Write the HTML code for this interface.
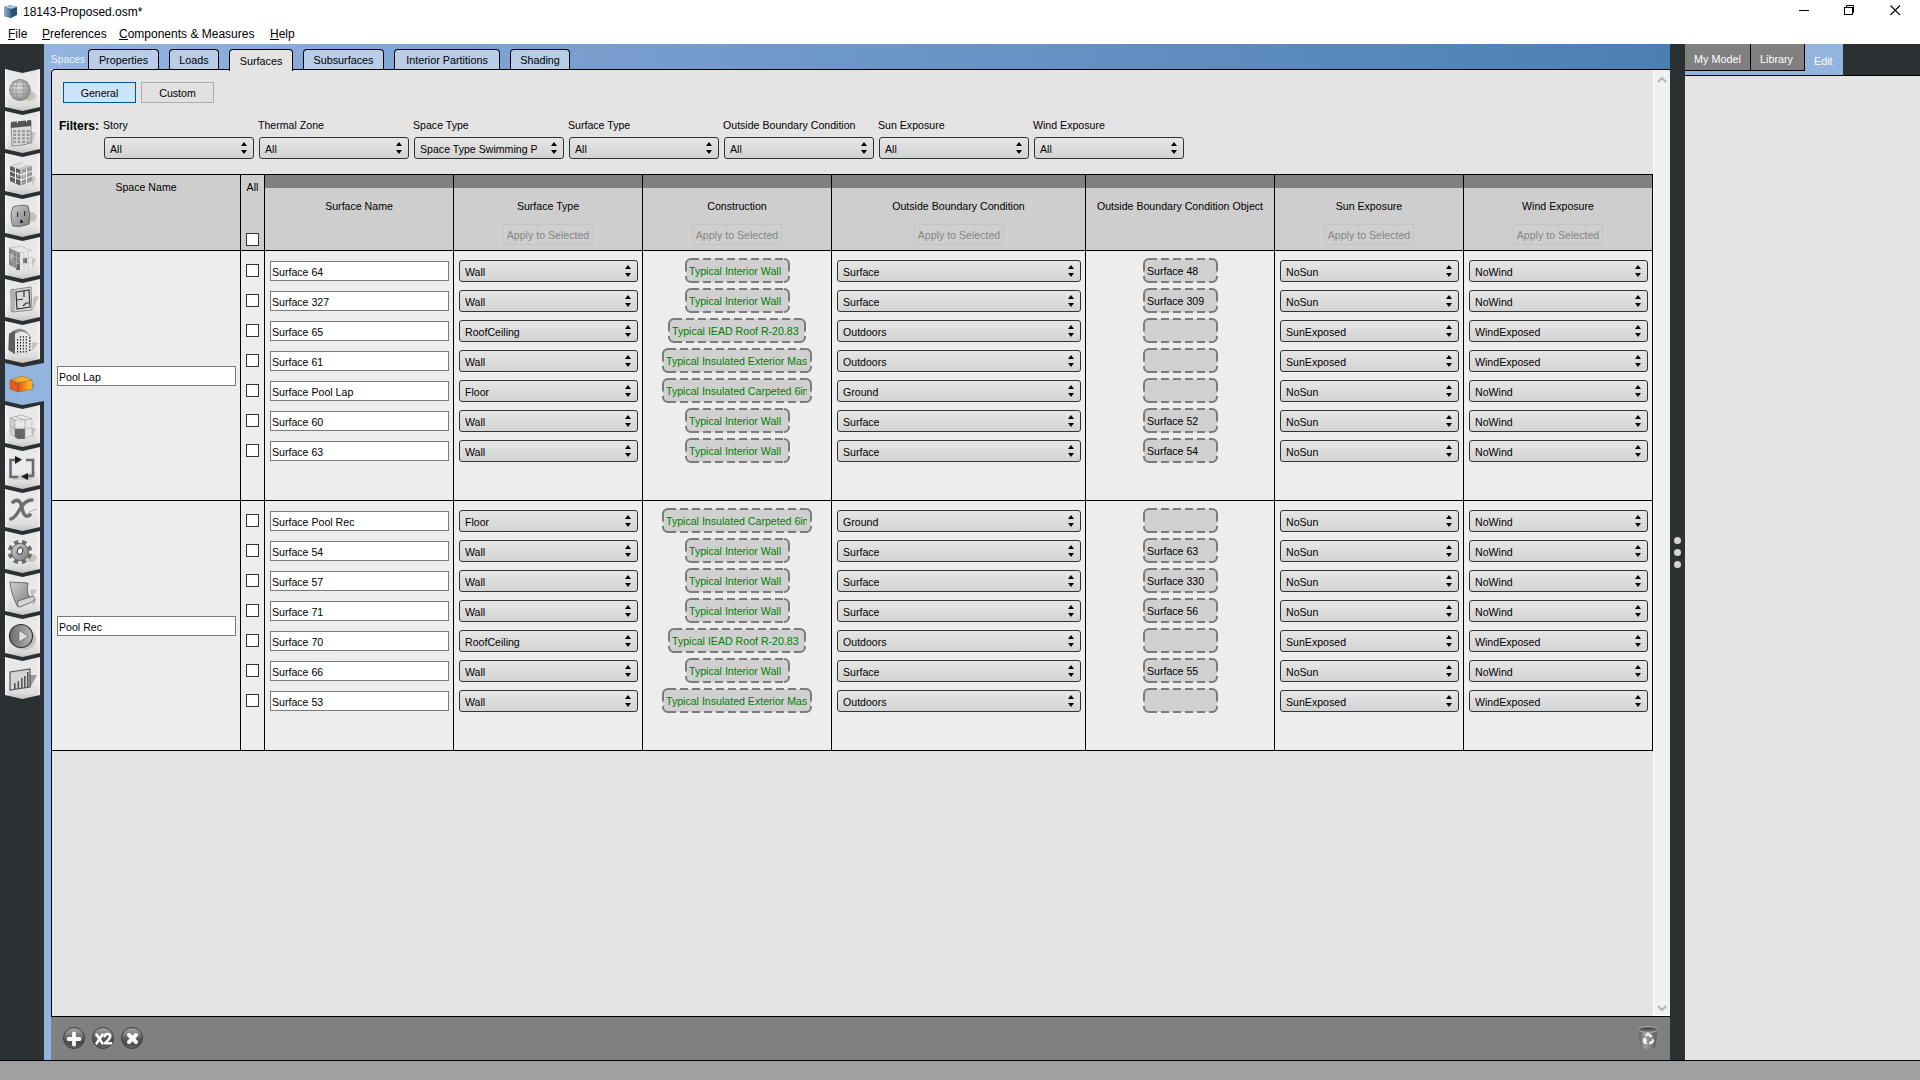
<!DOCTYPE html><html><head><meta charset="utf-8"><style>
*{box-sizing:border-box;margin:0;padding:0}
html,body{width:1920px;height:1080px;overflow:hidden;background:#fff;font-family:"Liberation Sans",sans-serif;color:#000}
.ab{position:absolute}
.t{position:absolute;white-space:nowrap;font-size:10.6px;line-height:13px}
.title{font-size:12px}
.menu{position:absolute;top:27px;font-size:12px;line-height:14px}
.menu u{text-decoration:none;position:relative}
.menu u:after{content:'';position:absolute;left:0;right:0;top:12px;height:1px;background:#000}
.tab{position:absolute;top:49px;height:21px;background:#b9cde8;border:1px solid #000;border-bottom:none;border-radius:4px 4px 0 0;font-size:10.8px;text-align:center;line-height:20px}
.cb{position:absolute;width:13px;height:13px;background:#fff;border:1px solid #333}
.le{position:absolute;height:20px;background:#fff;border:1px solid #7a7a7a;font-size:10.6px;line-height:18px;padding-left:1px;padding-top:1px;white-space:nowrap;overflow:hidden}
.co{position:absolute;height:22px;border:1px solid #2f3437;border-radius:3px;background:linear-gradient(#e6e6e6,#d3d3d3);font-size:10.6px;line-height:20px;padding-left:5px;padding-top:1px;white-space:nowrap;overflow:hidden}
.co:after{content:"";position:absolute;right:6px;top:4px;width:0;height:0;border-left:3px solid transparent;border-right:3px solid transparent;border-bottom:4px solid #000}
.co:before{content:"";position:absolute;right:6px;top:12px;width:0;height:0;border-left:3px solid transparent;border-right:3px solid transparent;border-top:4px solid #000}
.co span{display:block;overflow:hidden;width:calc(100% - 26px)}
.dz{position:absolute;height:25px}
.dz svg{position:absolute;left:0;top:0}
.dz div{position:absolute;left:4px;top:7px;font-size:10.6px;line-height:13px;white-space:nowrap;overflow:hidden}
.g{color:#008000}
.hd{position:absolute;font-size:10.6px;line-height:13px;white-space:nowrap;text-align:center}
.ap{position:absolute;top:224px;height:21px;width:90px;border:1px solid #c4c4c4;color:#858585;font-size:10.6px;line-height:19px;padding-top:1px;text-align:center;white-space:nowrap}
.vl{position:absolute;width:1px;background:#000}
.hl{position:absolute;height:1px;background:#000}
</style></head><body>
<svg class="ab" style="left:3px;top:4px" width="15" height="15" viewBox="0 0 15 15">
<defs><linearGradient id="cg1" x1="0" y1="0" x2="1" y2="0"><stop offset="0" stop-color="#8fb2d0"/><stop offset="1" stop-color="#3d6a92"/></linearGradient></defs>
<polygon points="1,3 7,1 14,3 14,11 8,14 1,12" fill="#2a4d70"/>
<polygon points="1,3 7,1 14,3 8,5" fill="#a9c7e0"/>
<polygon points="1,3 8,5 8,14 1,12" fill="url(#cg1)"/>
</svg>
<div class="t title" style="left:23px;top:5px;line-height:14px">18143-Proposed.osm*</div>
<div class="ab" style="left:1799px;top:10px;width:10px;height:1px;background:#000"></div>
<svg class="ab" style="left:1843px;top:4px" width="13" height="13" viewBox="0 0 13 13"><rect x="1.5" y="3.5" width="8" height="7" fill="none" stroke="#000"/><polyline points="3.5,3.5 3.5,1.5 10.5,1.5 10.5,8.5 9.5,8.5" fill="none" stroke="#000"/></svg>
<svg class="ab" style="left:1889px;top:4px" width="13" height="13" viewBox="0 0 13 13"><path d="M1.5 1.5L11 11M11 1.5L1.5 11" stroke="#000" stroke-width="1.1"/></svg>
<div class="menu" style="left:8px"><u>F</u>ile</div>
<div class="menu" style="left:42px"><u>P</u>references</div>
<div class="menu" style="left:119px"><u>C</u>omponents &amp; Measures</div>
<div class="menu" style="left:270px"><u>H</u>elp</div>
<div class="ab" style="left:0;top:44px;width:44px;height:1016px;background:#2b3033"></div>
<div class="ab" style="left:44px;top:44px;width:7px;height:1016px;background:#94b4e0"></div>
<svg class="ab" style="left:0;top:44px" width="51" height="1016" viewBox="0 44 51 1016">
<defs>
<linearGradient id="btn" x1="0" y1="0" x2="0" y2="1"><stop offset="0" stop-color="#e6e6e6"/><stop offset="0.55" stop-color="#ececec"/><stop offset="0.85" stop-color="#dcdcdc"/><stop offset="1" stop-color="#c4c4c4"/></linearGradient>
<linearGradient id="edge" x1="0" y1="0" x2="1" y2="0"><stop offset="0" stop-color="#fff" stop-opacity="0.5"/><stop offset="0.12" stop-color="#fff" stop-opacity="0"/><stop offset="0.88" stop-color="#fff" stop-opacity="0"/><stop offset="1" stop-color="#fff" stop-opacity="0.4"/></linearGradient>
<radialGradient id="glb" cx="0.4" cy="0.35" r="0.7"><stop offset="0" stop-color="#e6e6e6"/><stop offset="1" stop-color="#8c8c8c"/></radialGradient>
<linearGradient id="gry" x1="0" y1="0" x2="1" y2="1"><stop offset="0" stop-color="#d0d0d0"/><stop offset="1" stop-color="#7c7c7c"/></linearGradient>
<linearGradient id="gry2" x1="0" y1="0" x2="1" y2="0"><stop offset="0" stop-color="#6a6a6a"/><stop offset="1" stop-color="#b8b8b8"/></linearGradient>
<linearGradient id="org" x1="0" y1="0" x2="1" y2="0"><stop offset="0" stop-color="#e2501c"/><stop offset="1" stop-color="#ffcc22"/></linearGradient>
<linearGradient id="orgt" x1="0" y1="0" x2="1" y2="0"><stop offset="0" stop-color="#f0902a"/><stop offset="1" stop-color="#ffc820"/></linearGradient>
</defs>
<polygon points="5,69 22.5,73 40,69 40,107 22.5,111 5,107" fill="url(#btn)"/>
<polygon points="5,69 22.5,73 40,69 40,107 22.5,111 5,107" fill="url(#edge)"/>
<polygon points="5,111 22.5,115 40,111 40,149 22.5,153 5,149" fill="url(#btn)"/>
<polygon points="5,111 22.5,115 40,111 40,149 22.5,153 5,149" fill="url(#edge)"/>
<polygon points="5,153 22.5,157 40,153 40,191 22.5,195 5,191" fill="url(#btn)"/>
<polygon points="5,153 22.5,157 40,153 40,191 22.5,195 5,191" fill="url(#edge)"/>
<polygon points="5,195 22.5,199 40,195 40,233 22.5,237 5,233" fill="url(#btn)"/>
<polygon points="5,195 22.5,199 40,195 40,233 22.5,237 5,233" fill="url(#edge)"/>
<polygon points="5,237 22.5,241 40,237 40,275 22.5,279 5,275" fill="url(#btn)"/>
<polygon points="5,237 22.5,241 40,237 40,275 22.5,279 5,275" fill="url(#edge)"/>
<polygon points="5,279 22.5,283 40,279 40,317 22.5,321 5,317" fill="url(#btn)"/>
<polygon points="5,279 22.5,283 40,279 40,317 22.5,321 5,317" fill="url(#edge)"/>
<polygon points="5,321 22.5,325 40,321 40,359 22.5,363 5,359" fill="url(#btn)"/>
<polygon points="5,321 22.5,325 40,321 40,359 22.5,363 5,359" fill="url(#edge)"/>
<polygon points="5,363 22.5,367 44,363 44,401 22.5,405 5,401" fill="#94b4e0"/>
<polygon points="5,405 22.5,409 40,405 40,443 22.5,447 5,443" fill="url(#btn)"/>
<polygon points="5,405 22.5,409 40,405 40,443 22.5,447 5,443" fill="url(#edge)"/>
<polygon points="5,447 22.5,451 40,447 40,485 22.5,489 5,485" fill="url(#btn)"/>
<polygon points="5,447 22.5,451 40,447 40,485 22.5,489 5,485" fill="url(#edge)"/>
<polygon points="5,489 22.5,493 40,489 40,527 22.5,531 5,527" fill="url(#btn)"/>
<polygon points="5,489 22.5,493 40,489 40,527 22.5,531 5,527" fill="url(#edge)"/>
<polygon points="5,531 22.5,535 40,531 40,569 22.5,573 5,569" fill="url(#btn)"/>
<polygon points="5,531 22.5,535 40,531 40,569 22.5,573 5,569" fill="url(#edge)"/>
<polygon points="5,573 22.5,577 40,573 40,611 22.5,615 5,611" fill="url(#btn)"/>
<polygon points="5,573 22.5,577 40,573 40,611 22.5,615 5,611" fill="url(#edge)"/>
<polygon points="5,615 22.5,619 40,615 40,653 22.5,657 5,653" fill="url(#btn)"/>
<polygon points="5,615 22.5,619 40,615 40,653 22.5,657 5,653" fill="url(#edge)"/>
<polygon points="5,657 22.5,661 40,657 40,695 22.5,699 5,695" fill="url(#btn)"/>
<polygon points="5,657 22.5,661 40,657 40,695 22.5,699 5,695" fill="url(#edge)"/>
<ellipse cx="29" cy="96" rx="7" ry="5" fill="#c3c5ba"/>
<circle cx="20" cy="90" r="10.5" fill="url(#glb)" stroke="#8a8a8a" stroke-width="0.8"/>
<g fill="none" stroke="#8e8e8e" stroke-width="0.7"><ellipse cx="20" cy="90" rx="4" ry="10.5"/><ellipse cx="20" cy="90" rx="8" ry="10.5"/><path d="M10 86H30M9.5 90H30.5M10 94H30M12 82H28M12 98H28"/></g>
<polygon points="31,132 36,132 31,146" fill="#c3c5ba"/>
<path d="M11 124 L31 121 L31 143 Q21 146 12 146 Z" fill="#dcdcdc" stroke="#777" stroke-width="0.8"/>
<path d="M11 122 L31 120 L31 126 L11 128 Z" fill="#555"/>
<g fill="#fff"><rect x="17" y="119" width="1" height="4"/><rect x="26" y="118" width="1" height="4"/></g>
<g fill="#9a9a9a"><rect x="13.0" y="130.0" width="3" height="2.4"/><rect x="13.0" y="133.6" width="3" height="2.4"/><rect x="13.0" y="137.2" width="3" height="2.4"/><rect x="13.0" y="140.8" width="3" height="2.4"/><rect x="17.5" y="130.0" width="3" height="2.4"/><rect x="17.5" y="133.6" width="3" height="2.4"/><rect x="17.5" y="137.2" width="3" height="2.4"/><rect x="17.5" y="140.8" width="3" height="2.4"/><rect x="22.0" y="130.0" width="3" height="2.4"/><rect x="22.0" y="133.6" width="3" height="2.4"/><rect x="22.0" y="137.2" width="3" height="2.4"/><rect x="22.0" y="140.8" width="3" height="2.4"/><rect x="26.5" y="130.0" width="3" height="2.4"/><rect x="26.5" y="133.6" width="3" height="2.4"/><rect x="26.5" y="137.2" width="3" height="2.4"/><rect x="26.5" y="140.8" width="3" height="2.4"/></g>
<polygon points="32,176 36,177 32,186" fill="#c3c5ba"/>
<polygon points="10,166 21,162 32,166 21,170" fill="#c8c8c8"/>
<polygon points="10,166 21,170 21,186 10,181" fill="#5e5e5e"/>
<polygon points="21,170 32,166 32,181 21,186" fill="#9a9a9a"/>
<g stroke="#fff" stroke-width="0.9" fill="none"><path d="M10 171L21 175L32 171M10 176L21 180L32 176M14 167L25 163M17 168L28 164M15.5 168V183M26.5 168.5V184M21 170V186M18 172V177M24 172V177"/></g>
<ellipse cx="31" cy="217" rx="6" ry="5" fill="#c3c5ba"/>
<path d="M13 207 Q22 204 28 206 Q31 214 29 224 Q20 228 13 226 Q9 216 13 207Z" fill="url(#gry)" stroke="#555" stroke-width="0.8"/>
<g fill="#333"><rect x="17" y="212" width="1.2" height="5"/><rect x="24" y="211" width="1.2" height="5"/><path d="M20 221 Q21 218 23 221 V223 H20Z"/></g>
<polygon points="32,258 36,259 32,268" fill="#c3c5ba"/>
<polygon points="9,248 21,246 32,251 20,253" fill="#e8e8e8" stroke="#999" stroke-width="0.5"/>
<polygon points="9,248 20,253 20,270 9,265" fill="#888"/>
<polygon points="20,253 32,251 32,268 20,270" fill="#e9e9e9"/>
<g fill="#666"><rect x="23" y="258" width="4" height="5"/><rect x="16" y="264" width="4" height="6"/></g><g fill="#bbb"><rect x="10" y="254" width="3" height="5"/></g>
<g stroke="#bbb" stroke-width="0.6" fill="none"><path d="M9 254L20 259L32 257M9 259.5L20 264.5L32 262.5M13 250V267M16.5 251.5V268.5M24 252.5V269.5M28 252V269"/></g>
<polygon points="33,297 39,296 33,310" fill="#c3c5ba"/>
<path d="M11 290 L31 287 L32 310 L12 312 Z" fill="#d8d8d8" stroke="#777" stroke-width="0.8"/>
<rect x="11" y="289" width="3" height="22" rx="1.5" fill="#bcbcbc" stroke="#777" stroke-width="0.6"/>
<g fill="none" stroke="#333" stroke-width="1.2"><path d="M16 292 L29 290 L30 307 L17 309 Z M17 300 L23 299 M24 291 V297 M23 306 L26 303 L29 303"/></g>
<polygon points="32,342 38.5,343 32,351" fill="#c3c5ba"/>
<path d="M9 334 L12 332 L15 330 Q20 327 26 331 L29 334 L31 337 L31 350 L15 354 L8.5 350 Z" fill="#8c8c8c"/>
<path d="M15 334 Q21 329 28 334 L29 336 L31 337 L31 350 L15 354 Z" fill="#e8e8e8"/>
<path d="M12 332 L15 330 L15 354 L8.5 350 L9 334Z" fill="#5e5e5e"/>
<g fill="#2a2a2a"><rect x="17.0" y="338.9" width="1.1" height="1.7"/><rect x="17.0" y="341.9" width="1.1" height="1.7"/><rect x="17.0" y="344.9" width="1.1" height="1.7"/><rect x="17.0" y="347.8" width="1.1" height="1.7"/><rect x="17.0" y="350.8" width="1.1" height="1.7"/><rect x="19.9" y="336.0" width="1.1" height="1.7"/><rect x="19.9" y="338.9" width="1.1" height="1.7"/><rect x="19.9" y="341.9" width="1.1" height="1.7"/><rect x="19.9" y="344.9" width="1.1" height="1.7"/><rect x="19.9" y="347.8" width="1.1" height="1.7"/><rect x="19.9" y="350.8" width="1.1" height="1.7"/><rect x="22.8" y="336.0" width="1.1" height="1.7"/><rect x="22.8" y="338.9" width="1.1" height="1.7"/><rect x="22.8" y="341.9" width="1.1" height="1.7"/><rect x="22.8" y="344.9" width="1.1" height="1.7"/><rect x="22.8" y="347.8" width="1.1" height="1.7"/><rect x="22.8" y="350.8" width="1.1" height="1.7"/><rect x="25.7" y="336.0" width="1.1" height="1.7"/><rect x="25.7" y="338.9" width="1.1" height="1.7"/><rect x="25.7" y="341.9" width="1.1" height="1.7"/><rect x="25.7" y="344.9" width="1.1" height="1.7"/><rect x="25.7" y="347.8" width="1.1" height="1.7"/><rect x="25.7" y="350.8" width="1.1" height="1.7"/><rect x="29.3" y="337.0" width="1.2" height="1.8"/><rect x="29.3" y="340.0" width="1.2" height="1.8"/><rect x="29.3" y="343.0" width="1.2" height="1.8"/><rect x="29.3" y="346.0" width="1.2" height="1.8"/><rect x="29.3" y="349.0" width="1.2" height="1.8"/></g>
<polygon points="32,383 35,385 32,391" fill="#7f98b8"/>
<polygon points="10,380 22,376 32,380 20,383" fill="url(#orgt)" stroke="#a05a20" stroke-width="0.5"/>
<polygon points="10,380 18,383 18,392 10,389" fill="#e35a1e" stroke="#a05a20" stroke-width="0.5"/>
<polygon points="18,383 32,380 32,389 18,392" fill="url(#org)" stroke="#a05a20" stroke-width="0.5"/>
<polygon points="32,428 36,428 32,438" fill="#c3c5ba"/>
<polygon points="10,418 21,415 32,419 21,422" fill="#ececec" stroke="#999" stroke-width="0.6"/>
<polygon points="10,418 15,420 15,437 10,434" fill="#d0d0d0" stroke="#999" stroke-width="0.5"/>
<polygon points="15,420 32,419 32,436 18,439 15,437" fill="#e8e8e8" stroke="#999" stroke-width="0.5"/>
<polygon points="15,429 25,429 25,439 18,439 15,437" fill="#666"/>
<g stroke="#999" stroke-width="0.6" fill="none"><path d="M15 428.5L32 428M25 420V439M10 426L15 428.5M15.5 416.5L26.5 420.5M21 422V420"/></g>
<polygon points="14,476 36,472 31,480 12,480" fill="#c3c5ba" opacity="0.8"/>
<g fill="none" stroke="#6a6a6a" stroke-width="2.6"><path d="M17 460 H10.5 V477 H18"/><path d="M26 460 H33 V476 H27"/></g>
<g fill="#1a1a1a"><polygon points="15,456 22,459.5 15,464"/><polygon points="28,473 21,476.5 28,480"/></g>
<path d="M28 513 Q32 510 37 509" stroke="#aaa" stroke-width="1" fill="none"/>
<g fill="none" stroke="#6e6e6e" stroke-width="3.6" stroke-linecap="round"><path d="M13 502 Q20 497 22 508 Q24 519 30 515"/><path d="M32 500 Q25 500 20 509 Q15 518 11 519"/></g>
<ellipse cx="31" cy="558" rx="6" ry="4" fill="#c3c5ba"/>
<g transform="rotate(10 20 552)"><circle cx="20" cy="552" r="10" fill="none" stroke="#6e6e6e" stroke-width="4.4" stroke-dasharray="4.3 3.55"/></g>
<circle cx="20" cy="552" r="8.6" fill="url(#gry)" stroke="#555" stroke-width="0.8"/>
<ellipse cx="20" cy="551" rx="2.6" ry="3.4" fill="#fff" stroke="#333" stroke-width="1" transform="rotate(25 20 551)"/>
<polygon points="30,590 37,589 31,600 37,599 33,606" fill="#c3c5ba"/>
<path d="M10 582 L28 583 Q26 592 30 598 L18 607 Q12 598 10 582Z" fill="url(#gry)" stroke="#555" stroke-width="0.8"/>
<path d="M18 601 L33 596 Q36 598 34 601 L20 607 Q16 606 18 601Z" fill="#d4d4d4" stroke="#555" stroke-width="0.8"/>
<ellipse cx="24" cy="639" rx="12" ry="11" fill="#c3c5ba"/>
<circle cx="21" cy="636" r="11.5" fill="url(#gry2)" stroke="#333" stroke-width="1.2"/>
<polygon points="19,630 28,636.5 19,642" fill="#e0e0e0" stroke="#555" stroke-width="0.6"/>
<polygon points="30,675 37,675 30,688" fill="#9a9a9a"/>
<path d="M10 672 L30 669 L30 687 L10 690Z" fill="#d4d4d4" stroke="#555" stroke-width="1.2"/>
<g fill="#555"><rect x="14" y="683" width="1.6" height="6"/><rect x="17.5" y="681" width="1.6" height="8"/><rect x="21" y="678" width="1.6" height="10"/><rect x="24" y="676" width="1.6" height="12"/><rect x="27" y="672" width="1.6" height="15"/></g>
</svg>
<div class="ab" style="left:51px;top:44px;width:1619px;height:25px;background:linear-gradient(90deg,#94b4e0 0%,#7aa0d0 30%,#6a94c6 55%,#4b7fb4 100%)"></div>
<div class="t" style="left:51px;top:53px;font-size:10.2px;line-height:14px;color:#eef3fa">Spaces</div>
<div class="tab" style="left:88px;width:71px">Properties</div>
<div class="tab" style="left:169px;width:50px">Loads</div>
<div class="tab" style="left:229px;width:64px;background:#e4e4e4;height:22px;z-index:3;line-height:22px">Surfaces</div>
<div class="tab" style="left:303px;width:81px">Subsurfaces</div>
<div class="tab" style="left:394px;width:106px">Interior Partitions</div>
<div class="tab" style="left:510px;width:60px">Shading</div>
<div class="ab" style="left:51px;top:69px;width:1619px;height:948px;background:#e4e4e4;border-left:1px solid #000;border-top:1px solid #000;border-top-left-radius:4px"></div>
<div class="ab" style="left:63px;top:82px;width:73px;height:21px;background:#cce4f7;border:1px solid #005499;font-size:10.6px;line-height:19px;padding-top:1px;text-align:center">General</div>
<div class="ab" style="left:141px;top:82px;width:73px;height:21px;background:#e1e1e1;border:1px solid #adadad;font-size:10.6px;line-height:19px;padding-top:1px;text-align:center">Custom</div>
<div class="t" style="left:59px;top:119px;font-weight:bold;font-size:12px;line-height:14px">Filters:</div>
<div class="t" style="left:103px;top:119px">Story</div>
<div class="co" style="left:104px;top:137px;width:150px"><span>All</span></div>
<div class="t" style="left:258px;top:119px">Thermal Zone</div>
<div class="co" style="left:259px;top:137px;width:150px"><span>All</span></div>
<div class="t" style="left:413px;top:119px">Space Type</div>
<div class="co" style="left:414px;top:137px;width:150px"><span>Space Type Swimming Pc</span></div>
<div class="t" style="left:568px;top:119px">Surface Type</div>
<div class="co" style="left:569px;top:137px;width:150px"><span>All</span></div>
<div class="t" style="left:723px;top:119px">Outside Boundary Condition</div>
<div class="co" style="left:724px;top:137px;width:150px"><span>All</span></div>
<div class="t" style="left:878px;top:119px">Sun Exposure</div>
<div class="co" style="left:879px;top:137px;width:150px"><span>All</span></div>
<div class="t" style="left:1033px;top:119px">Wind Exposure</div>
<div class="co" style="left:1034px;top:137px;width:150px"><span>All</span></div>
<div class="ab" style="left:52px;top:175px;width:1600px;height:75px;background:#cecece"></div>
<div class="ab" style="left:265px;top:175px;width:1387px;height:13px;background:#808080"></div>
<div class="ab" style="left:52px;top:251px;width:1600px;height:499px;background:#ededed"></div>
<div class="hl" style="left:51px;top:174px;width:1602px"></div>
<div class="hl" style="left:51px;top:250px;width:1602px"></div>
<div class="hl" style="left:51px;top:500px;width:1602px"></div>
<div class="hl" style="left:51px;top:750px;width:1602px"></div>
<div class="vl" style="left:51px;top:174px;height:577px"></div>
<div class="vl" style="left:240px;top:174px;height:577px"></div>
<div class="vl" style="left:264px;top:174px;height:577px"></div>
<div class="vl" style="left:453px;top:174px;height:577px"></div>
<div class="vl" style="left:642px;top:174px;height:577px"></div>
<div class="vl" style="left:831px;top:174px;height:577px"></div>
<div class="vl" style="left:1085px;top:174px;height:577px"></div>
<div class="vl" style="left:1274px;top:174px;height:577px"></div>
<div class="vl" style="left:1463px;top:174px;height:577px"></div>
<div class="vl" style="left:1652px;top:174px;height:577px"></div>
<div class="hd" style="left:52px;top:181px;width:188px">Space Name</div>
<div class="hd" style="left:241px;top:181px;width:23px">All</div>
<div class="cb" style="left:246px;top:233px"></div>
<div class="hd" style="left:265px;top:200px;width:188px">Surface Name</div>
<div class="hd" style="left:454px;top:200px;width:188px">Surface Type</div>
<div class="ap" style="left:503px">Apply to Selected</div>
<div class="hd" style="left:643px;top:200px;width:188px">Construction</div>
<div class="ap" style="left:692px">Apply to Selected</div>
<div class="hd" style="left:832px;top:200px;width:253px">Outside Boundary Condition</div>
<div class="ap" style="left:914px">Apply to Selected</div>
<div class="hd" style="left:1086px;top:200px;width:188px">Outside Boundary Condition Object</div>
<div class="hd" style="left:1275px;top:200px;width:188px">Sun Exposure</div>
<div class="ap" style="left:1324px">Apply to Selected</div>
<div class="hd" style="left:1464px;top:200px;width:188px">Wind Exposure</div>
<div class="ap" style="left:1513px">Apply to Selected</div>
<div class="le" style="left:57px;top:366px;width:179px">Pool Lap</div>
<div class="cb" style="left:246px;top:264px"></div>
<div class="le" style="left:270px;top:261px;width:179px">Surface 64</div>
<div class="co" style="left:459px;top:260px;width:179px"><span>Wall</span></div>
<div class="dz" style="left:685px;top:258px;width:105px"><svg width="105" height="25"><rect x="1" y="1" width="103" height="23" rx="5" ry="5" fill="#d0d0d0"/><path d="M1 13.5V6A5 5 0 0 1 6 1H14M1 18V19A5 5 0 0 0 6 24H14M18 1H26M18 24H26M30 1H38M30 24H38M42 1H50M42 24H50M54 1H62M54 24H62M66 1H74M66 24H74M78 1H86M78 24H86M90 1H98M90 24H98M99 1H99A5 5 0 0 1 104 6V13.5M99 24H99A5 5 0 0 0 104 19V18" fill="none" stroke="#7b7b7b" stroke-width="2"/></svg><div class="g" style="width:96px">Typical Interior Wall</div></div>
<div class="co" style="left:837px;top:260px;width:244px"><span>Surface</span></div>
<div class="dz" style="left:1143px;top:258px;width:75px"><svg width="75" height="25"><rect x="1" y="1" width="73" height="23" rx="5" ry="5" fill="#d0d0d0"/><path d="M1 13.5V6A5 5 0 0 1 6 1H14M1 18V19A5 5 0 0 0 6 24H14M18 1H26M18 24H26M30 1H38M30 24H38M42 1H50M42 24H50M54 1H62M54 24H62M66 1H69A5 5 0 0 1 74 6V13.5M66 24H69A5 5 0 0 0 74 19V18" fill="none" stroke="#7b7b7b" stroke-width="2"/></svg><div style="width:66px">Surface 48</div></div>
<div class="co" style="left:1280px;top:260px;width:179px"><span>NoSun</span></div>
<div class="co" style="left:1469px;top:260px;width:179px"><span>NoWind</span></div>
<div class="cb" style="left:246px;top:294px"></div>
<div class="le" style="left:270px;top:291px;width:179px">Surface 327</div>
<div class="co" style="left:459px;top:290px;width:179px"><span>Wall</span></div>
<div class="dz" style="left:685px;top:288px;width:105px"><svg width="105" height="25"><rect x="1" y="1" width="103" height="23" rx="5" ry="5" fill="#d0d0d0"/><path d="M1 13.5V6A5 5 0 0 1 6 1H14M1 18V19A5 5 0 0 0 6 24H14M18 1H26M18 24H26M30 1H38M30 24H38M42 1H50M42 24H50M54 1H62M54 24H62M66 1H74M66 24H74M78 1H86M78 24H86M90 1H98M90 24H98M99 1H99A5 5 0 0 1 104 6V13.5M99 24H99A5 5 0 0 0 104 19V18" fill="none" stroke="#7b7b7b" stroke-width="2"/></svg><div class="g" style="width:96px">Typical Interior Wall</div></div>
<div class="co" style="left:837px;top:290px;width:244px"><span>Surface</span></div>
<div class="dz" style="left:1143px;top:288px;width:75px"><svg width="75" height="25"><rect x="1" y="1" width="73" height="23" rx="5" ry="5" fill="#d0d0d0"/><path d="M1 13.5V6A5 5 0 0 1 6 1H14M1 18V19A5 5 0 0 0 6 24H14M18 1H26M18 24H26M30 1H38M30 24H38M42 1H50M42 24H50M54 1H62M54 24H62M66 1H69A5 5 0 0 1 74 6V13.5M66 24H69A5 5 0 0 0 74 19V18" fill="none" stroke="#7b7b7b" stroke-width="2"/></svg><div style="width:66px">Surface 309</div></div>
<div class="co" style="left:1280px;top:290px;width:179px"><span>NoSun</span></div>
<div class="co" style="left:1469px;top:290px;width:179px"><span>NoWind</span></div>
<div class="cb" style="left:246px;top:324px"></div>
<div class="le" style="left:270px;top:321px;width:179px">Surface 65</div>
<div class="co" style="left:459px;top:320px;width:179px"><span>RoofCeiling</span></div>
<div class="dz" style="left:668px;top:318px;width:138px"><svg width="138" height="25"><rect x="1" y="1" width="136" height="23" rx="5" ry="5" fill="#d0d0d0"/><path d="M1 13.5V6A5 5 0 0 1 6 1H14M1 18V19A5 5 0 0 0 6 24H14M18 1H26M18 24H26M30 1H38M30 24H38M42 1H50M42 24H50M54 1H62M54 24H62M66 1H74M66 24H74M78 1H86M78 24H86M90 1H98M90 24H98M102 1H110M102 24H110M114 1H122M114 24H122M126 1H132A5 5 0 0 1 137 6V13.5M126 24H132A5 5 0 0 0 137 19V18" fill="none" stroke="#7b7b7b" stroke-width="2"/></svg><div class="g" style="width:129px">Typical IEAD Roof R-20.83</div></div>
<div class="co" style="left:837px;top:320px;width:244px"><span>Outdoors</span></div>
<div class="dz" style="left:1143px;top:318px;width:75px"><svg width="75" height="25"><rect x="1" y="1" width="73" height="23" rx="5" ry="5" fill="#d0d0d0"/><path d="M1 13.5V6A5 5 0 0 1 6 1H14M1 18V19A5 5 0 0 0 6 24H14M18 1H26M18 24H26M30 1H38M30 24H38M42 1H50M42 24H50M54 1H62M54 24H62M66 1H69A5 5 0 0 1 74 6V13.5M66 24H69A5 5 0 0 0 74 19V18" fill="none" stroke="#7b7b7b" stroke-width="2"/></svg><div style="width:66px"></div></div>
<div class="co" style="left:1280px;top:320px;width:179px"><span>SunExposed</span></div>
<div class="co" style="left:1469px;top:320px;width:179px"><span>WindExposed</span></div>
<div class="cb" style="left:246px;top:354px"></div>
<div class="le" style="left:270px;top:351px;width:179px">Surface 61</div>
<div class="co" style="left:459px;top:350px;width:179px"><span>Wall</span></div>
<div class="dz" style="left:662px;top:348px;width:150px"><svg width="150" height="25"><rect x="1" y="1" width="148" height="23" rx="5" ry="5" fill="#d0d0d0"/><path d="M1 13.5V6A5 5 0 0 1 6 1H14M1 18V19A5 5 0 0 0 6 24H14M18 1H26M18 24H26M30 1H38M30 24H38M42 1H50M42 24H50M54 1H62M54 24H62M66 1H74M66 24H74M78 1H86M78 24H86M90 1H98M90 24H98M102 1H110M102 24H110M114 1H122M114 24H122M126 1H134M126 24H134M138 1H144A5 5 0 0 1 149 6V13.5M138 24H144A5 5 0 0 0 149 19V18" fill="none" stroke="#7b7b7b" stroke-width="2"/></svg><div class="g" style="width:141px">Typical Insulated Exterior Mass Wall</div></div>
<div class="co" style="left:837px;top:350px;width:244px"><span>Outdoors</span></div>
<div class="dz" style="left:1143px;top:348px;width:75px"><svg width="75" height="25"><rect x="1" y="1" width="73" height="23" rx="5" ry="5" fill="#d0d0d0"/><path d="M1 13.5V6A5 5 0 0 1 6 1H14M1 18V19A5 5 0 0 0 6 24H14M18 1H26M18 24H26M30 1H38M30 24H38M42 1H50M42 24H50M54 1H62M54 24H62M66 1H69A5 5 0 0 1 74 6V13.5M66 24H69A5 5 0 0 0 74 19V18" fill="none" stroke="#7b7b7b" stroke-width="2"/></svg><div style="width:66px"></div></div>
<div class="co" style="left:1280px;top:350px;width:179px"><span>SunExposed</span></div>
<div class="co" style="left:1469px;top:350px;width:179px"><span>WindExposed</span></div>
<div class="cb" style="left:246px;top:384px"></div>
<div class="le" style="left:270px;top:381px;width:179px">Surface Pool Lap</div>
<div class="co" style="left:459px;top:380px;width:179px"><span>Floor</span></div>
<div class="dz" style="left:662px;top:378px;width:150px"><svg width="150" height="25"><rect x="1" y="1" width="148" height="23" rx="5" ry="5" fill="#d0d0d0"/><path d="M1 13.5V6A5 5 0 0 1 6 1H14M1 18V19A5 5 0 0 0 6 24H14M18 1H26M18 24H26M30 1H38M30 24H38M42 1H50M42 24H50M54 1H62M54 24H62M66 1H74M66 24H74M78 1H86M78 24H86M90 1H98M90 24H98M102 1H110M102 24H110M114 1H122M114 24H122M126 1H134M126 24H134M138 1H144A5 5 0 0 1 149 6V13.5M138 24H144A5 5 0 0 0 149 19V18" fill="none" stroke="#7b7b7b" stroke-width="2"/></svg><div class="g" style="width:141px">Typical Insulated Carpeted 6in Slab Floor</div></div>
<div class="co" style="left:837px;top:380px;width:244px"><span>Ground</span></div>
<div class="dz" style="left:1143px;top:378px;width:75px"><svg width="75" height="25"><rect x="1" y="1" width="73" height="23" rx="5" ry="5" fill="#d0d0d0"/><path d="M1 13.5V6A5 5 0 0 1 6 1H14M1 18V19A5 5 0 0 0 6 24H14M18 1H26M18 24H26M30 1H38M30 24H38M42 1H50M42 24H50M54 1H62M54 24H62M66 1H69A5 5 0 0 1 74 6V13.5M66 24H69A5 5 0 0 0 74 19V18" fill="none" stroke="#7b7b7b" stroke-width="2"/></svg><div style="width:66px"></div></div>
<div class="co" style="left:1280px;top:380px;width:179px"><span>NoSun</span></div>
<div class="co" style="left:1469px;top:380px;width:179px"><span>NoWind</span></div>
<div class="cb" style="left:246px;top:414px"></div>
<div class="le" style="left:270px;top:411px;width:179px">Surface 60</div>
<div class="co" style="left:459px;top:410px;width:179px"><span>Wall</span></div>
<div class="dz" style="left:685px;top:408px;width:105px"><svg width="105" height="25"><rect x="1" y="1" width="103" height="23" rx="5" ry="5" fill="#d0d0d0"/><path d="M1 13.5V6A5 5 0 0 1 6 1H14M1 18V19A5 5 0 0 0 6 24H14M18 1H26M18 24H26M30 1H38M30 24H38M42 1H50M42 24H50M54 1H62M54 24H62M66 1H74M66 24H74M78 1H86M78 24H86M90 1H98M90 24H98M99 1H99A5 5 0 0 1 104 6V13.5M99 24H99A5 5 0 0 0 104 19V18" fill="none" stroke="#7b7b7b" stroke-width="2"/></svg><div class="g" style="width:96px">Typical Interior Wall</div></div>
<div class="co" style="left:837px;top:410px;width:244px"><span>Surface</span></div>
<div class="dz" style="left:1143px;top:408px;width:75px"><svg width="75" height="25"><rect x="1" y="1" width="73" height="23" rx="5" ry="5" fill="#d0d0d0"/><path d="M1 13.5V6A5 5 0 0 1 6 1H14M1 18V19A5 5 0 0 0 6 24H14M18 1H26M18 24H26M30 1H38M30 24H38M42 1H50M42 24H50M54 1H62M54 24H62M66 1H69A5 5 0 0 1 74 6V13.5M66 24H69A5 5 0 0 0 74 19V18" fill="none" stroke="#7b7b7b" stroke-width="2"/></svg><div style="width:66px">Surface 52</div></div>
<div class="co" style="left:1280px;top:410px;width:179px"><span>NoSun</span></div>
<div class="co" style="left:1469px;top:410px;width:179px"><span>NoWind</span></div>
<div class="cb" style="left:246px;top:444px"></div>
<div class="le" style="left:270px;top:441px;width:179px">Surface 63</div>
<div class="co" style="left:459px;top:440px;width:179px"><span>Wall</span></div>
<div class="dz" style="left:685px;top:438px;width:105px"><svg width="105" height="25"><rect x="1" y="1" width="103" height="23" rx="5" ry="5" fill="#d0d0d0"/><path d="M1 13.5V6A5 5 0 0 1 6 1H14M1 18V19A5 5 0 0 0 6 24H14M18 1H26M18 24H26M30 1H38M30 24H38M42 1H50M42 24H50M54 1H62M54 24H62M66 1H74M66 24H74M78 1H86M78 24H86M90 1H98M90 24H98M99 1H99A5 5 0 0 1 104 6V13.5M99 24H99A5 5 0 0 0 104 19V18" fill="none" stroke="#7b7b7b" stroke-width="2"/></svg><div class="g" style="width:96px">Typical Interior Wall</div></div>
<div class="co" style="left:837px;top:440px;width:244px"><span>Surface</span></div>
<div class="dz" style="left:1143px;top:438px;width:75px"><svg width="75" height="25"><rect x="1" y="1" width="73" height="23" rx="5" ry="5" fill="#d0d0d0"/><path d="M1 13.5V6A5 5 0 0 1 6 1H14M1 18V19A5 5 0 0 0 6 24H14M18 1H26M18 24H26M30 1H38M30 24H38M42 1H50M42 24H50M54 1H62M54 24H62M66 1H69A5 5 0 0 1 74 6V13.5M66 24H69A5 5 0 0 0 74 19V18" fill="none" stroke="#7b7b7b" stroke-width="2"/></svg><div style="width:66px">Surface 54</div></div>
<div class="co" style="left:1280px;top:440px;width:179px"><span>NoSun</span></div>
<div class="co" style="left:1469px;top:440px;width:179px"><span>NoWind</span></div>
<div class="le" style="left:57px;top:616px;width:179px">Pool Rec</div>
<div class="cb" style="left:246px;top:514px"></div>
<div class="le" style="left:270px;top:511px;width:179px">Surface Pool Rec</div>
<div class="co" style="left:459px;top:510px;width:179px"><span>Floor</span></div>
<div class="dz" style="left:662px;top:508px;width:150px"><svg width="150" height="25"><rect x="1" y="1" width="148" height="23" rx="5" ry="5" fill="#d0d0d0"/><path d="M1 13.5V6A5 5 0 0 1 6 1H14M1 18V19A5 5 0 0 0 6 24H14M18 1H26M18 24H26M30 1H38M30 24H38M42 1H50M42 24H50M54 1H62M54 24H62M66 1H74M66 24H74M78 1H86M78 24H86M90 1H98M90 24H98M102 1H110M102 24H110M114 1H122M114 24H122M126 1H134M126 24H134M138 1H144A5 5 0 0 1 149 6V13.5M138 24H144A5 5 0 0 0 149 19V18" fill="none" stroke="#7b7b7b" stroke-width="2"/></svg><div class="g" style="width:141px">Typical Insulated Carpeted 6in Slab Floor</div></div>
<div class="co" style="left:837px;top:510px;width:244px"><span>Ground</span></div>
<div class="dz" style="left:1143px;top:508px;width:75px"><svg width="75" height="25"><rect x="1" y="1" width="73" height="23" rx="5" ry="5" fill="#d0d0d0"/><path d="M1 13.5V6A5 5 0 0 1 6 1H14M1 18V19A5 5 0 0 0 6 24H14M18 1H26M18 24H26M30 1H38M30 24H38M42 1H50M42 24H50M54 1H62M54 24H62M66 1H69A5 5 0 0 1 74 6V13.5M66 24H69A5 5 0 0 0 74 19V18" fill="none" stroke="#7b7b7b" stroke-width="2"/></svg><div style="width:66px"></div></div>
<div class="co" style="left:1280px;top:510px;width:179px"><span>NoSun</span></div>
<div class="co" style="left:1469px;top:510px;width:179px"><span>NoWind</span></div>
<div class="cb" style="left:246px;top:544px"></div>
<div class="le" style="left:270px;top:541px;width:179px">Surface 54</div>
<div class="co" style="left:459px;top:540px;width:179px"><span>Wall</span></div>
<div class="dz" style="left:685px;top:538px;width:105px"><svg width="105" height="25"><rect x="1" y="1" width="103" height="23" rx="5" ry="5" fill="#d0d0d0"/><path d="M1 13.5V6A5 5 0 0 1 6 1H14M1 18V19A5 5 0 0 0 6 24H14M18 1H26M18 24H26M30 1H38M30 24H38M42 1H50M42 24H50M54 1H62M54 24H62M66 1H74M66 24H74M78 1H86M78 24H86M90 1H98M90 24H98M99 1H99A5 5 0 0 1 104 6V13.5M99 24H99A5 5 0 0 0 104 19V18" fill="none" stroke="#7b7b7b" stroke-width="2"/></svg><div class="g" style="width:96px">Typical Interior Wall</div></div>
<div class="co" style="left:837px;top:540px;width:244px"><span>Surface</span></div>
<div class="dz" style="left:1143px;top:538px;width:75px"><svg width="75" height="25"><rect x="1" y="1" width="73" height="23" rx="5" ry="5" fill="#d0d0d0"/><path d="M1 13.5V6A5 5 0 0 1 6 1H14M1 18V19A5 5 0 0 0 6 24H14M18 1H26M18 24H26M30 1H38M30 24H38M42 1H50M42 24H50M54 1H62M54 24H62M66 1H69A5 5 0 0 1 74 6V13.5M66 24H69A5 5 0 0 0 74 19V18" fill="none" stroke="#7b7b7b" stroke-width="2"/></svg><div style="width:66px">Surface 63</div></div>
<div class="co" style="left:1280px;top:540px;width:179px"><span>NoSun</span></div>
<div class="co" style="left:1469px;top:540px;width:179px"><span>NoWind</span></div>
<div class="cb" style="left:246px;top:574px"></div>
<div class="le" style="left:270px;top:571px;width:179px">Surface 57</div>
<div class="co" style="left:459px;top:570px;width:179px"><span>Wall</span></div>
<div class="dz" style="left:685px;top:568px;width:105px"><svg width="105" height="25"><rect x="1" y="1" width="103" height="23" rx="5" ry="5" fill="#d0d0d0"/><path d="M1 13.5V6A5 5 0 0 1 6 1H14M1 18V19A5 5 0 0 0 6 24H14M18 1H26M18 24H26M30 1H38M30 24H38M42 1H50M42 24H50M54 1H62M54 24H62M66 1H74M66 24H74M78 1H86M78 24H86M90 1H98M90 24H98M99 1H99A5 5 0 0 1 104 6V13.5M99 24H99A5 5 0 0 0 104 19V18" fill="none" stroke="#7b7b7b" stroke-width="2"/></svg><div class="g" style="width:96px">Typical Interior Wall</div></div>
<div class="co" style="left:837px;top:570px;width:244px"><span>Surface</span></div>
<div class="dz" style="left:1143px;top:568px;width:75px"><svg width="75" height="25"><rect x="1" y="1" width="73" height="23" rx="5" ry="5" fill="#d0d0d0"/><path d="M1 13.5V6A5 5 0 0 1 6 1H14M1 18V19A5 5 0 0 0 6 24H14M18 1H26M18 24H26M30 1H38M30 24H38M42 1H50M42 24H50M54 1H62M54 24H62M66 1H69A5 5 0 0 1 74 6V13.5M66 24H69A5 5 0 0 0 74 19V18" fill="none" stroke="#7b7b7b" stroke-width="2"/></svg><div style="width:66px">Surface 330</div></div>
<div class="co" style="left:1280px;top:570px;width:179px"><span>NoSun</span></div>
<div class="co" style="left:1469px;top:570px;width:179px"><span>NoWind</span></div>
<div class="cb" style="left:246px;top:604px"></div>
<div class="le" style="left:270px;top:601px;width:179px">Surface 71</div>
<div class="co" style="left:459px;top:600px;width:179px"><span>Wall</span></div>
<div class="dz" style="left:685px;top:598px;width:105px"><svg width="105" height="25"><rect x="1" y="1" width="103" height="23" rx="5" ry="5" fill="#d0d0d0"/><path d="M1 13.5V6A5 5 0 0 1 6 1H14M1 18V19A5 5 0 0 0 6 24H14M18 1H26M18 24H26M30 1H38M30 24H38M42 1H50M42 24H50M54 1H62M54 24H62M66 1H74M66 24H74M78 1H86M78 24H86M90 1H98M90 24H98M99 1H99A5 5 0 0 1 104 6V13.5M99 24H99A5 5 0 0 0 104 19V18" fill="none" stroke="#7b7b7b" stroke-width="2"/></svg><div class="g" style="width:96px">Typical Interior Wall</div></div>
<div class="co" style="left:837px;top:600px;width:244px"><span>Surface</span></div>
<div class="dz" style="left:1143px;top:598px;width:75px"><svg width="75" height="25"><rect x="1" y="1" width="73" height="23" rx="5" ry="5" fill="#d0d0d0"/><path d="M1 13.5V6A5 5 0 0 1 6 1H14M1 18V19A5 5 0 0 0 6 24H14M18 1H26M18 24H26M30 1H38M30 24H38M42 1H50M42 24H50M54 1H62M54 24H62M66 1H69A5 5 0 0 1 74 6V13.5M66 24H69A5 5 0 0 0 74 19V18" fill="none" stroke="#7b7b7b" stroke-width="2"/></svg><div style="width:66px">Surface 56</div></div>
<div class="co" style="left:1280px;top:600px;width:179px"><span>NoSun</span></div>
<div class="co" style="left:1469px;top:600px;width:179px"><span>NoWind</span></div>
<div class="cb" style="left:246px;top:634px"></div>
<div class="le" style="left:270px;top:631px;width:179px">Surface 70</div>
<div class="co" style="left:459px;top:630px;width:179px"><span>RoofCeiling</span></div>
<div class="dz" style="left:668px;top:628px;width:138px"><svg width="138" height="25"><rect x="1" y="1" width="136" height="23" rx="5" ry="5" fill="#d0d0d0"/><path d="M1 13.5V6A5 5 0 0 1 6 1H14M1 18V19A5 5 0 0 0 6 24H14M18 1H26M18 24H26M30 1H38M30 24H38M42 1H50M42 24H50M54 1H62M54 24H62M66 1H74M66 24H74M78 1H86M78 24H86M90 1H98M90 24H98M102 1H110M102 24H110M114 1H122M114 24H122M126 1H132A5 5 0 0 1 137 6V13.5M126 24H132A5 5 0 0 0 137 19V18" fill="none" stroke="#7b7b7b" stroke-width="2"/></svg><div class="g" style="width:129px">Typical IEAD Roof R-20.83</div></div>
<div class="co" style="left:837px;top:630px;width:244px"><span>Outdoors</span></div>
<div class="dz" style="left:1143px;top:628px;width:75px"><svg width="75" height="25"><rect x="1" y="1" width="73" height="23" rx="5" ry="5" fill="#d0d0d0"/><path d="M1 13.5V6A5 5 0 0 1 6 1H14M1 18V19A5 5 0 0 0 6 24H14M18 1H26M18 24H26M30 1H38M30 24H38M42 1H50M42 24H50M54 1H62M54 24H62M66 1H69A5 5 0 0 1 74 6V13.5M66 24H69A5 5 0 0 0 74 19V18" fill="none" stroke="#7b7b7b" stroke-width="2"/></svg><div style="width:66px"></div></div>
<div class="co" style="left:1280px;top:630px;width:179px"><span>SunExposed</span></div>
<div class="co" style="left:1469px;top:630px;width:179px"><span>WindExposed</span></div>
<div class="cb" style="left:246px;top:664px"></div>
<div class="le" style="left:270px;top:661px;width:179px">Surface 66</div>
<div class="co" style="left:459px;top:660px;width:179px"><span>Wall</span></div>
<div class="dz" style="left:685px;top:658px;width:105px"><svg width="105" height="25"><rect x="1" y="1" width="103" height="23" rx="5" ry="5" fill="#d0d0d0"/><path d="M1 13.5V6A5 5 0 0 1 6 1H14M1 18V19A5 5 0 0 0 6 24H14M18 1H26M18 24H26M30 1H38M30 24H38M42 1H50M42 24H50M54 1H62M54 24H62M66 1H74M66 24H74M78 1H86M78 24H86M90 1H98M90 24H98M99 1H99A5 5 0 0 1 104 6V13.5M99 24H99A5 5 0 0 0 104 19V18" fill="none" stroke="#7b7b7b" stroke-width="2"/></svg><div class="g" style="width:96px">Typical Interior Wall</div></div>
<div class="co" style="left:837px;top:660px;width:244px"><span>Surface</span></div>
<div class="dz" style="left:1143px;top:658px;width:75px"><svg width="75" height="25"><rect x="1" y="1" width="73" height="23" rx="5" ry="5" fill="#d0d0d0"/><path d="M1 13.5V6A5 5 0 0 1 6 1H14M1 18V19A5 5 0 0 0 6 24H14M18 1H26M18 24H26M30 1H38M30 24H38M42 1H50M42 24H50M54 1H62M54 24H62M66 1H69A5 5 0 0 1 74 6V13.5M66 24H69A5 5 0 0 0 74 19V18" fill="none" stroke="#7b7b7b" stroke-width="2"/></svg><div style="width:66px">Surface 55</div></div>
<div class="co" style="left:1280px;top:660px;width:179px"><span>NoSun</span></div>
<div class="co" style="left:1469px;top:660px;width:179px"><span>NoWind</span></div>
<div class="cb" style="left:246px;top:694px"></div>
<div class="le" style="left:270px;top:691px;width:179px">Surface 53</div>
<div class="co" style="left:459px;top:690px;width:179px"><span>Wall</span></div>
<div class="dz" style="left:662px;top:688px;width:150px"><svg width="150" height="25"><rect x="1" y="1" width="148" height="23" rx="5" ry="5" fill="#d0d0d0"/><path d="M1 13.5V6A5 5 0 0 1 6 1H14M1 18V19A5 5 0 0 0 6 24H14M18 1H26M18 24H26M30 1H38M30 24H38M42 1H50M42 24H50M54 1H62M54 24H62M66 1H74M66 24H74M78 1H86M78 24H86M90 1H98M90 24H98M102 1H110M102 24H110M114 1H122M114 24H122M126 1H134M126 24H134M138 1H144A5 5 0 0 1 149 6V13.5M138 24H144A5 5 0 0 0 149 19V18" fill="none" stroke="#7b7b7b" stroke-width="2"/></svg><div class="g" style="width:141px">Typical Insulated Exterior Mass Wall</div></div>
<div class="co" style="left:837px;top:690px;width:244px"><span>Outdoors</span></div>
<div class="dz" style="left:1143px;top:688px;width:75px"><svg width="75" height="25"><rect x="1" y="1" width="73" height="23" rx="5" ry="5" fill="#d0d0d0"/><path d="M1 13.5V6A5 5 0 0 1 6 1H14M1 18V19A5 5 0 0 0 6 24H14M18 1H26M18 24H26M30 1H38M30 24H38M42 1H50M42 24H50M54 1H62M54 24H62M66 1H69A5 5 0 0 1 74 6V13.5M66 24H69A5 5 0 0 0 74 19V18" fill="none" stroke="#7b7b7b" stroke-width="2"/></svg><div style="width:66px"></div></div>
<div class="co" style="left:1280px;top:690px;width:179px"><span>SunExposed</span></div>
<div class="co" style="left:1469px;top:690px;width:179px"><span>WindExposed</span></div>
<div class="ab" style="left:1653px;top:70px;width:17px;height:946px;background:#f0f0f0;border-left:1px solid #fff"></div>
<div class="ab" style="left:1652px;top:1015px;width:18px;height:1px;background:#fff"></div>
<svg class="ab" style="left:1657px;top:76px" width="10" height="8"><polyline points="1,6 5,2 9,6" fill="none" stroke="#b5b5b5" stroke-width="2"/></svg>
<svg class="ab" style="left:1657px;top:1004px" width="10" height="8"><polyline points="1,2 5,6 9,2" fill="none" stroke="#b5b5b5" stroke-width="2"/></svg>
<div class="ab" style="left:51px;top:1016px;width:1619px;height:1px;background:#000"></div>
<div class="ab" style="left:51px;top:1017px;width:1619px;height:43px;background:#808080"></div>
<div class="ab" style="left:63px;top:1027px;width:22px;height:22px;border-radius:50%;background:linear-gradient(#a4a4a4 0%,#7a7a7a 35%,#555 55%,#4c4c4c 80%,#6a6a6a 100%);border:1px solid #3e3e3e"></div>
<div class="ab" style="left:92px;top:1027px;width:22px;height:22px;border-radius:50%;background:linear-gradient(#a4a4a4 0%,#7a7a7a 35%,#555 55%,#4c4c4c 80%,#6a6a6a 100%);border:1px solid #3e3e3e"></div>
<div class="ab" style="left:121px;top:1027px;width:22px;height:22px;border-radius:50%;background:linear-gradient(#a4a4a4 0%,#7a7a7a 35%,#555 55%,#4c4c4c 80%,#6a6a6a 100%);border:1px solid #3e3e3e"></div>
<svg class="ab" style="left:66px;top:1031px" width="16" height="16"><path d="M8 2.5V13.5M2.5 8H13.5" stroke="#fff" stroke-width="3.8" stroke-linecap="round"/></svg>
<svg class="ab" style="left:94px;top:1031px" width="20" height="16"><path d="M2.5 3.5L8.5 12.5M8.5 3.5L2.5 12.5" stroke="#fff" stroke-width="2.6" stroke-linecap="round"/><path d="M10.5 5.2Q11 3 13.5 3Q16.5 3 16.2 5.6Q16 7.5 11 12.2H17" fill="none" stroke="#fff" stroke-width="2.4" stroke-linecap="round" stroke-linejoin="round"/></svg>
<svg class="ab" style="left:125px;top:1031px" width="15" height="15"><path d="M4 4L11 11M11 4L4 11" stroke="#fff" stroke-width="4" stroke-linecap="round"/></svg>
<svg class="ab" style="left:1637px;top:1025px" width="22" height="26" viewBox="0 0 22 26"><defs><linearGradient id="rb" x1="0" x2="1"><stop offset="0" stop-color="#5e5e5e"/><stop offset="0.35" stop-color="#a0a0a0"/><stop offset="1" stop-color="#5c5c5c"/></linearGradient><linearGradient id="rbt" x1="0" x2="0" y1="0" y2="1"><stop offset="0" stop-color="#3a3a3a"/><stop offset="1" stop-color="#777"/></linearGradient></defs>
<path d="M1.5 4.5 L20.5 4.5 L18.5 22.5 Q11 25 3.5 22.5 Z" fill="url(#rb)"/><ellipse cx="11" cy="4.5" rx="9.5" ry="2.8" fill="url(#rbt)" stroke="#b4b4b4" stroke-width="1"/>
<g fill="#f4f4f4"><path d="M8 9.5 L11 7.5 L14 9.5 L15.5 12 L13 12.5 L11 10 L9.5 12 Z"/><path d="M6 13.5 L8.5 12.5 L10 15.5 L9 17.5 L11 19 L7.5 19 Q5 17 6 13.5Z"/><path d="M16 13 L17 16 Q16.5 19 13 19.2 L12 19.2 L12.5 16.5 L14 16.5 Z"/></g></svg>
<div class="ab" style="left:1670px;top:44px;width:15px;height:1016px;background:#2b3033"></div>
<div class="ab" style="left:1674px;top:537px;width:7px;height:7px;border-radius:50%;background:#d3d6d9"></div>
<div class="ab" style="left:1674px;top:549px;width:7px;height:7px;border-radius:50%;background:#d3d6d9"></div>
<div class="ab" style="left:1674px;top:561px;width:7px;height:7px;border-radius:50%;background:#d3d6d9"></div>
<div class="ab" style="left:1685px;top:44px;width:235px;height:31px;background:#2b3033"></div>
<div class="ab" style="left:1685px;top:44px;width:158px;height:31px;background:#94b4e0"></div>
<div class="ab" style="left:1685px;top:44px;width:66px;height:27px;background:#808080;border-right:1px solid #000;border-bottom:1px solid #000;color:#fff;font-size:10.8px;line-height:30px;padding-left:9px">My Model</div>
<div class="ab" style="left:1751px;top:44px;width:54px;height:27px;background:#808080;border-right:1px solid #000;border-bottom:1px solid #000;color:#fff;font-size:10.8px;line-height:30px;padding-left:9px">Library</div>
<div class="t" style="left:1814px;top:54px;font-size:10.8px;line-height:14px;color:#fff">Edit</div>
<div class="ab" style="left:1685px;top:75px;width:235px;height:1px;background:#000"></div>
<div class="ab" style="left:1685px;top:76px;width:235px;height:984px;background:#e4e4e4"></div>
<div class="ab" style="left:0;top:1060px;width:1920px;height:1px;background:#000"></div>
<div class="ab" style="left:0;top:1061px;width:1920px;height:19px;background:#a0a0a0"></div>
</body></html>
